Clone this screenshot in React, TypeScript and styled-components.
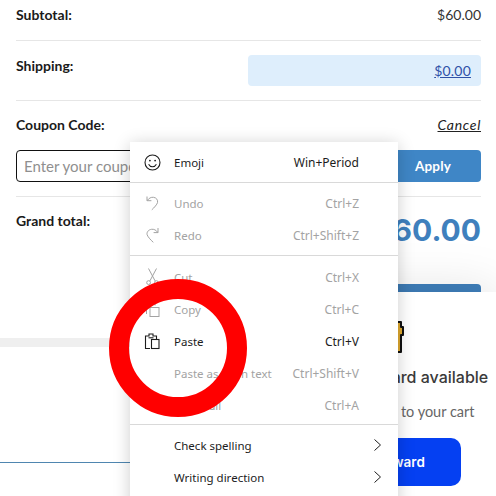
import React from 'react';
import styled, { createGlobalStyle } from 'styled-components';

const GlobalStyle = createGlobalStyle`
  html, body {
    margin: 0;
    padding: 0;
    background: #fff;
  }
`;

const menuFont = `"Noto Sans", "Open Sans", sans-serif`;

const EmojiIcon = () => (
  <svg width="17" height="17" viewBox="0 0 17 17" fill="none" stroke="currentColor" strokeWidth="1.1">
    <circle cx="8.5" cy="8.5" r="7.5" />
    <circle cx="5.9" cy="6.6" r="0.9" fill="currentColor" stroke="none" />
    <circle cx="11.1" cy="6.6" r="0.9" fill="currentColor" stroke="none" />
    <path d="M4.6 10.2c1 1.8 2.4 2.6 3.9 2.6s2.9-.8 3.9-2.6" />
  </svg>
);

const UndoIcon = () => (
  <svg width="17" height="17" viewBox="0 0 17 17" fill="none" stroke="currentColor" strokeWidth="1">
    <path d="M3 1.5v4.2h4.4M3.2 5.5C5 3.2 7 2 9.5 2.3c3 .4 4.6 2.8 4 5.3-.4 1.7-3.2 5-5.7 7.2" />
  </svg>
);

const RedoIcon = () => (
  <svg width="17" height="17" viewBox="0 0 17 17" fill="none" stroke="currentColor" strokeWidth="1">
    <path d="M14 1v4.6H9.6M13.8 5.4C12 3 10 2 7.5 2.3c-3 .4-5 2.8-4.4 5.3.4 1.8 3.4 5.3 6.2 7.7" />
  </svg>
);

const CutIcon = () => (
  <svg width="17" height="18" viewBox="0 0 17 18" fill="none" stroke="currentColor" strokeWidth="1">
    <path d="M4.5 0.5l6.6 12.4M12.5 0.5L5.9 12.9" />
    <circle cx="4.6" cy="14.6" r="1.9" />
    <circle cx="12.4" cy="14.6" r="1.9" />
  </svg>
);

const CopyIcon = () => (
  <svg width="17" height="17" viewBox="0 0 17 17" fill="none" stroke="currentColor" strokeWidth="1">
    <path d="M5 1.5h6v3M2.5 4v9" />
    <rect x="6" y="6.5" width="9" height="9" />
  </svg>
);

const PasteIcon = () => (
  <svg width="17" height="17" viewBox="0 0 17 17" fill="none" stroke="currentColor" strokeWidth="1.1">
    <path d="M6 15.5H1.5V3H5V1h4v2h3.5v3" />
    <path d="M4.5 4.8h5" />
    <rect x="7.5" y="6.5" width="7.5" height="9" />
  </svg>
);

const Chevron = () => (
  <svg width="9" height="14" viewBox="0 0 9 14" fill="none" stroke="currentColor" strokeWidth="1">
    <path d="M1.5 1.5L7.5 7l-6 5.5" />
  </svg>
);

const Trophy = () => (
  <svg width="44" height="42" viewBox="0 0 44 42">
    <path
      d="M3 6h38v5h2v8h-2v17H3V19H1v-8h2z"
      fill="#dfa92f"
      stroke="#111"
      strokeWidth="2"
      strokeLinejoin="round"
    />
  </svg>
);

type MenuEntry =
  | { divider: true; top: number; bottom: number }
  | { label: string; shortcut?: string; icon?: React.ReactNode; disabled?: boolean; submenu?: boolean };

const menuData: MenuEntry[] = [
  { label: 'Emoji', shortcut: 'Win+Period', icon: <EmojiIcon /> },
  { divider: true, top: 4, bottom: 4 },
  { label: 'Undo', shortcut: 'Ctrl+Z', icon: <UndoIcon />, disabled: true },
  { label: 'Redo', shortcut: 'Ctrl+Shift+Z', icon: <RedoIcon />, disabled: true },
  { divider: true, top: 4, bottom: 5 },
  { label: 'Cut', shortcut: 'Ctrl+X', icon: <CutIcon />, disabled: true },
  { label: 'Copy', shortcut: 'Ctrl+C', icon: <CopyIcon />, disabled: true },
  { label: 'Paste', shortcut: 'Ctrl+V', icon: <PasteIcon /> },
  { label: 'Paste as plain text', shortcut: 'Ctrl+Shift+V', disabled: true },
  { label: 'Select all', shortcut: 'Ctrl+A', disabled: true },
  { divider: true, top: 3, bottom: 4 },
  { label: 'Check spelling', submenu: true },
  { label: 'Writing direction', submenu: true }
];

const App = () => {
  return (
    <Page>
      <GlobalStyle />
      <Summary>
        <SubtotalRow>
          <Label>Subtotal:</Label>
          <Value>$60.00</Value>
        </SubtotalRow>
        <ShippingRow>
          <ShippingLabel>Shipping:</ShippingLabel>
          <ShippingBox>
            <ShippingLink href="#">$0.00</ShippingLink>
          </ShippingBox>
        </ShippingRow>
        <CouponSection>
          <CouponHead>
            <Label>Coupon Code:</Label>
            <CancelLink href="#">Cancel</CancelLink>
          </CouponHead>
          <CouponForm>
            <CouponInput placeholder="Enter your coupon code" />
            <ApplyButton>Apply</ApplyButton>
          </CouponForm>
        </CouponSection>
        <TotalRow>
          <Label>Grand total:</Label>
          <TotalValue>$60.00</TotalValue>
        </TotalRow>
        <CheckoutButton />
      </Summary>
      <Band />
      <FooterLine />

      <RewardCard>
        <TrophySlot>
          <Trophy />
        </TrophySlot>
        <RewardTitle>You have a reward available</RewardTitle>
        <RewardText>Add your reward to your cart</RewardText>
        <RewardButton>Claim reward</RewardButton>
      </RewardCard>

      <Menu>
        {menuData.map((item, index) =>
          'divider' in item ? (
            <MenuDivider key={index} $top={item.top} $bottom={item.bottom} />
          ) : (
            <MenuItem key={index} $disabled={item.disabled}>
              <IconSlot>{item.icon}</IconSlot>
              <ItemLabel>{item.label}</ItemLabel>
              {item.shortcut && <Shortcut>{item.shortcut}</Shortcut>}
              {item.submenu && (
                <ChevronSlot>
                  <Chevron />
                </ChevronSlot>
              )}
            </MenuItem>
          )
        )}
      </Menu>

      <RedCircle />
    </Page>
  );
};

export default App;

const Page = styled.div`
  position: relative;
  width: 496px;
  height: 496px;
  overflow: hidden;
  background: #fff;
  font-family: 'Lato', sans-serif;
  color: #111;
`;

const Summary = styled.div`
  display: flex;
  flex-direction: column;
  padding: 0 15px 0 16px;
`;

const SubtotalRow = styled.div`
  display: flex;
  justify-content: space-between;
  height: 41px;
  padding-top: 6px;
  box-sizing: border-box;
  border-bottom: 1px solid #e6e6e6;
`;

const Label = styled.span`
  font-size: 14px;
  line-height: 18px;
  font-weight: 700;
  color: #1a1a1a;
`;

const ShippingLabel = styled(Label)`
  margin-top: 2px;
`;

const Value = styled.span`
  font-size: 14px;
  line-height: 18px;
  color: #333;
`;

const ShippingRow = styled.div`
  display: flex;
  justify-content: space-between;
  height: 60px;
  padding-top: 14px;
  box-sizing: border-box;
  border-bottom: 1px solid #e6e6e6;
`;

const ShippingBox = styled.div`
  width: 233px;
  height: 31px;
  box-sizing: border-box;
  display: flex;
  align-items: center;
  justify-content: flex-end;
  padding-right: 10px;
  background: #deeefc;
  border-radius: 4px;
`;

const ShippingLink = styled.a`
  font-size: 14px;
  letter-spacing: 0.2px;
  color: #2f51a8;
`;

const CouponSection = styled.div`
  display: flex;
  flex-direction: column;
  height: 96px;
  padding-top: 15px;
  box-sizing: border-box;
  border-bottom: 1px solid #e6e6e6;
`;

const CouponHead = styled.div`
  display: flex;
  justify-content: space-between;
  height: 34px;
`;

const CancelLink = styled.a`
  font-size: 14px;
  line-height: 18px;
  font-style: italic;
  letter-spacing: 0.7px;
  color: #222;
  text-decoration: underline;
`;

const CouponForm = styled.div`
  display: flex;
  height: 32px;
`;

const CouponInput = styled.input`
  flex: 1;
  min-width: 0;
  box-sizing: border-box;
  padding: 0 7px;
  border: 1px solid #111;
  border-radius: 4px;
  font-family: 'Lato', sans-serif;
  font-size: 15px;

  &::placeholder {
    color: #8f8f8f;
  }
`;

const ApplyButton = styled.button`
  width: 150px;
  border: 0;
  padding: 0 0 0 54px;
  border-radius: 0 4px 4px 0;
  background: #3f86c6;
  color: #fff;
  font-family: 'Lato', sans-serif;
  font-size: 13.5px;
  font-weight: 700;
  letter-spacing: 0.2px;
`;

const TotalRow = styled.div`
  display: flex;
  justify-content: space-between;
  height: 87px;
  padding-top: 15px;
  box-sizing: border-box;
`;

const TotalValue = styled.span`
  font-family: 'Inter', sans-serif;
  font-size: 30px;
  line-height: 36px;
  font-weight: 700;
  color: #3f80bd;
`;

// most of this button sits behind the context menu
const CheckoutButton = styled.div`
  height: 46px;
  margin-left: 170px;
  border-radius: 4px;
  background: #3f7fbb;
`;

const Band = styled.div`
  height: 9px;
  margin-top: 8px;
  background: #efefef;
`;

const FooterLine = styled.div`
  height: 1px;
  margin-top: 115px;
  background: #4f86b0;
`;

const RewardCard = styled.div`
  position: absolute;
  top: 292px;
  left: 268px;
  width: 228px;
  height: 204px;
  display: flex;
  flex-direction: column;
  align-items: center;
  background: #fff;
  box-shadow: 0 0 50px rgba(0, 0, 0, 0.13);
`;

const TrophySlot = styled.div`
  height: 42px;
  margin-top: 24px;
`;

const RewardTitle = styled.div`
  margin-top: 9px;
  font-family: 'Inter', sans-serif;
  font-size: 16px;
  font-weight: 500;
  line-height: 20px;
  color: #3a3a3a;
  white-space: nowrap;
`;

const RewardText = styled.div`
  margin-top: 16px;
  font-family: 'Lato', sans-serif;
  font-size: 14.5px;
  line-height: 18px;
  color: #666;
  padding-left: 2px;
`;

const RewardButton = styled.button`
  margin-top: 17px;
  width: 158px;
  height: 48px;
  border: 0;
  border-radius: 10px;
  background: #0540f2;
  color: #fff;
  font-family: 'Inter', sans-serif;
  font-size: 13.5px;
  font-weight: 600;
`;

const Menu = styled.div`
  position: absolute;
  top: 142px;
  left: 130px;
  width: 268px;
  height: 380px;
  padding-top: 4px;
  box-sizing: border-box;
  display: flex;
  flex-direction: column;
  background: #fff;
  box-shadow: 0 2px 16px rgba(0, 0, 0, 0.2);
  font-family: ${menuFont};
  font-size: 12px;
`;

const MenuItem = styled.div<{ $disabled?: boolean }>`
  display: flex;
  align-items: center;
  flex: none;
  height: 32px;
  color: ${(props) => (props.$disabled ? '#a3a3a3' : '#1c1c1c')};
`;

const MenuDivider = styled.div<{ $top: number; $bottom: number }>`
  flex: none;
  height: 1px;
  margin: ${(props) => props.$top}px 0 ${(props) => props.$bottom}px;
  background: #d9d9d9;
`;

const IconSlot = styled.div`
  width: 44px;
  display: flex;
  justify-content: center;
  padding-left: 1px;
  box-sizing: border-box;
`;

const ItemLabel = styled.span`
  flex: 1;
  font-size: 11.5px;
  white-space: nowrap;
`;

const Shortcut = styled.span`
  margin-right: 39px;
`;

const ChevronSlot = styled.div`
  display: flex;
  margin-right: 16px;
`;

const RedCircle = styled.div`
  position: absolute;
  left: 109px;
  top: 279px;
  width: 138px;
  height: 138px;
  box-sizing: border-box;
  border: 20px solid #ff0000;
  border-radius: 50%;
`;
